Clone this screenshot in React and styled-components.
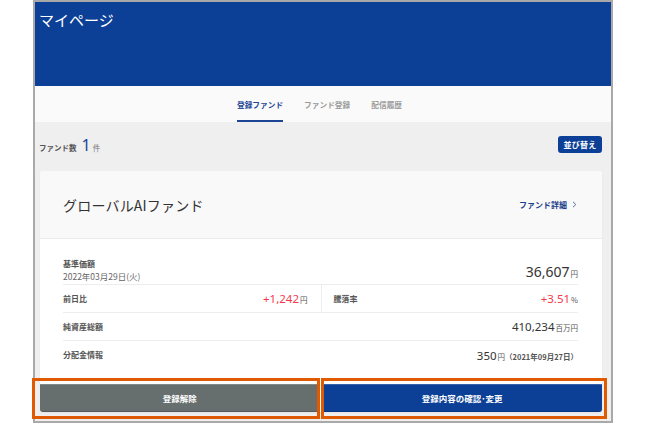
import React from 'react';
import styled, { createGlobalStyle } from 'styled-components';

const BLUE = '#0c4097';
const JP = '"Noto Sans CJK JP", "Noto Sans", sans-serif';
const NUM = '"Noto Sans", "Noto Sans CJK JP", sans-serif';

const GlobalStyle = createGlobalStyle`
  html, body {
    margin: 0;
    background: #fff;
  }
  body {
    font-family: ${JP};
    color: #333;
  }
`;

const Frame = styled.div`
  box-sizing: border-box;
  margin-left: 33px;
  width: 580px;
  height: 423px;
  border: 2px solid #a9a9a9;
  background: #efefef;
  display: flex;
  flex-direction: column;
`;

const Header = styled.header`
  height: 84px;
  flex: none;
  background: ${BLUE};
  padding: 9px 4px 0;
  box-sizing: border-box;
`;

const PageTitle = styled.h1`
  margin: 0;
  font-size: 15px;
  line-height: 18px;
  font-weight: 400;
  color: #fff;
`;

const Tabs = styled.nav`
  height: 36px;
  flex: none;
  background: #fafafa;
  display: flex;
  justify-content: center;
  gap: 21px;
  padding-right: 7px;
`;

const Tab = styled.div`
  box-sizing: border-box;
  padding-top: 2px;
  display: flex;
  align-items: center;
  font-size: 7.7px;
  font-weight: 700;
  color: ${p => (p.$active ? '#1c4596' : '#9a9a9a')};
  border-bottom: 2px solid ${p => (p.$active ? '#1c4596' : 'transparent')};
`;

const Content = styled.main`
  flex: 1;
  padding: 0 9px 0 4px;
  display: flex;
  flex-direction: column;
`;

const CountRow = styled.div`
  height: 17px;
  margin: 14px 0 18px;
  display: flex;
  align-items: center;
  justify-content: space-between;
`;

const Count = styled.div`
  display: flex;
  align-items: baseline;
  color: #555;
`;

const CountLabel = styled.span`
  font-size: 7.5px;
  font-weight: 700;
  margin-right: 5px;
`;

const CountNum = styled.span`
  font-family: ${NUM};
  font-size: 16px;
  line-height: 16px;
  color: #1c4596;
  margin-right: 2px;
`;

const CountUnit = styled.span`
  font-size: 7.5px;
  color: #777;
`;

const SortButton = styled.button`
  width: 44px;
  height: 17px;
  padding: 0;
  border: none;
  border-radius: 3px;
  background: ${BLUE};
  color: #fff;
  font-family: ${JP};
  font-size: 8px;
  font-weight: 700;
  letter-spacing: 0.3px;
`;

const Card = styled.section`
  margin-left: 1px;
  background: #fff;
  border-radius: 3px;
  box-shadow: 0 1px 2px rgba(0, 0, 0, 0.05);
  display: flex;
  flex-direction: column;
`;

const CardHead = styled.div`
  height: 68px;
  box-sizing: border-box;
  background: #f9f9f9;
  border-bottom: 1px solid #ececec;
  border-radius: 3px 3px 0 0;
  padding: 0 25px 0 23px;
  display: flex;
  align-items: center;
  justify-content: space-between;
`;

const FundName = styled.h2`
  margin: 0;
  font-size: 14px;
  font-weight: 400;
  color: #333;
  letter-spacing: 0.2px;
`;

const DetailLink = styled.a`
  display: flex;
  align-items: center;
  gap: 5px;
  font-size: 8px;
  font-weight: 700;
  color: #1c3f8c;
  text-decoration: none;
`;

const CardBody = styled.div`
  padding: 0 24px 15px 23px;
`;

const Row = styled.div`
  box-sizing: border-box;
  height: ${p => p.$h || 28}px;
  display: flex;
  border-bottom: ${p => (p.$last ? 'none' : '1px solid #ededed')};
`;

const Cell = styled.div`
  flex: 1;
  display: flex;
  align-items: ${p => p.$align || 'center'};
  justify-content: space-between;
  padding-left: ${p => (p.$right ? '12px' : '0')};
  padding-right: ${p => (p.$left ? '13px' : '0')};
  padding-bottom: ${p => (p.$align === 'flex-end' ? '1px' : '0')};
  border-left: ${p => (p.$right ? '1px solid #ededed' : 'none')};
`;

const LabelBlock = styled.div`
  display: flex;
  flex-direction: column;
`;

const Label = styled.span`
  font-size: 8px;
  line-height: 12px;
  font-weight: 700;
  color: #555;
`;

const DateText = styled.span`
  font-size: 8.5px;
  line-height: 13px;
  color: #666;
`;

const Value = styled.span`
  font-family: ${NUM};
  font-size: ${p => p.$size || 11.5}px;
  color: ${p => (p.$up ? '#f3394d' : '#333')};
  white-space: nowrap;
  padding-bottom: ${p => (p.$size ? '2px' : '0')};
`;

const Unit = styled.span`
  font-family: ${JP};
  font-size: 7.5px;
  color: #555;
  margin-left: 1px;
`;

const Note = styled.span`
  font-family: ${JP};
  font-size: 7.5px;
  font-weight: 700;
  color: #555;
`;

const Footer = styled.div`
  display: flex;
  gap: 3px;
`;

const ActionButton = styled.button`
  position: relative;
  flex: 1;
  height: 28px;
  padding: 0;
  border: none;
  background: ${p => p.$bg};
  color: #fff;
  font-family: ${JP};
  font-size: 8.5px;
  font-weight: 700;
  border-radius: ${p => p.$radius};
  box-shadow: inset 0 1px 0 rgba(255, 255, 255, 0.18), inset 0 -1px 0 rgba(0, 0, 0, 0.15);

  &::after {
    content: '';
    position: absolute;
    top: -6px;
    bottom: -7px;
    left: ${p => p.$ring[0]}px;
    right: ${p => p.$ring[1]}px;
    border: 3px solid #df5a00;
    pointer-events: none;
  }
`;

const Chevron = () => (
  <svg width="5" height="7" viewBox="0 0 5 7" fill="none">
    <path d="M1 0.8 L3.8 3.5 L1 6.2" stroke="#5b6f99" strokeWidth="1" />
  </svg>
);

export default function App() {
  return (
    <>
      <GlobalStyle />
      <Frame>
        <Header>
          <PageTitle>マイページ</PageTitle>
        </Header>
        <Tabs>
          <Tab $active>登録ファンド</Tab>
          <Tab>ファンド登録</Tab>
          <Tab>配信履歴</Tab>
        </Tabs>
        <Content>
          <CountRow>
            <Count>
              <CountLabel>ファンド数</CountLabel>
              <CountNum>1</CountNum>
              <CountUnit>件</CountUnit>
            </Count>
            <SortButton>並び替え</SortButton>
          </CountRow>
          <Card>
            <CardHead>
              <FundName>グローバルAIファンド</FundName>
              <DetailLink href="#">
                ファンド詳細 <Chevron />
              </DetailLink>
            </CardHead>
            <CardBody>
              <Row $h={46}>
                <Cell $align="flex-end">
                  <LabelBlock>
                    <Label>基準価額</Label>
                    <DateText>2022年03月29日(火)</DateText>
                  </LabelBlock>
                  <Value $size={14}>
                    36,607<Unit>円</Unit>
                  </Value>
                </Cell>
              </Row>
              <Row>
                <Cell $left>
                  <Label>前日比</Label>
                  <Value $up>
                    +1,242<Unit>円</Unit>
                  </Value>
                </Cell>
                <Cell $right>
                  <Label>騰落率</Label>
                  <Value $up>
                    +3.51<Unit>%</Unit>
                  </Value>
                </Cell>
              </Row>
              <Row>
                <Cell>
                  <Label>純資産総額</Label>
                  <Value>
                    410,234<Unit>百万円</Unit>
                  </Value>
                </Cell>
              </Row>
              <Row $last>
                <Cell>
                  <Label>分配金情報</Label>
                  <Value>
                    350<Unit>円</Unit>
                    <Note>（2021年09月27日）</Note>
                  </Value>
                </Cell>
              </Row>
            </CardBody>
            <Footer>
              <ActionButton $bg="#676e6e" $radius="0 0 0 3px" $ring={[-8, 0]}>
                登録解除
              </ActionButton>
              <ActionButton $bg={BLUE} $radius="0 0 3px 0" $ring={[-2, -5]}>
                登録内容の確認･変更
              </ActionButton>
            </Footer>
          </Card>
        </Content>
      </Frame>
    </>
  );
}
